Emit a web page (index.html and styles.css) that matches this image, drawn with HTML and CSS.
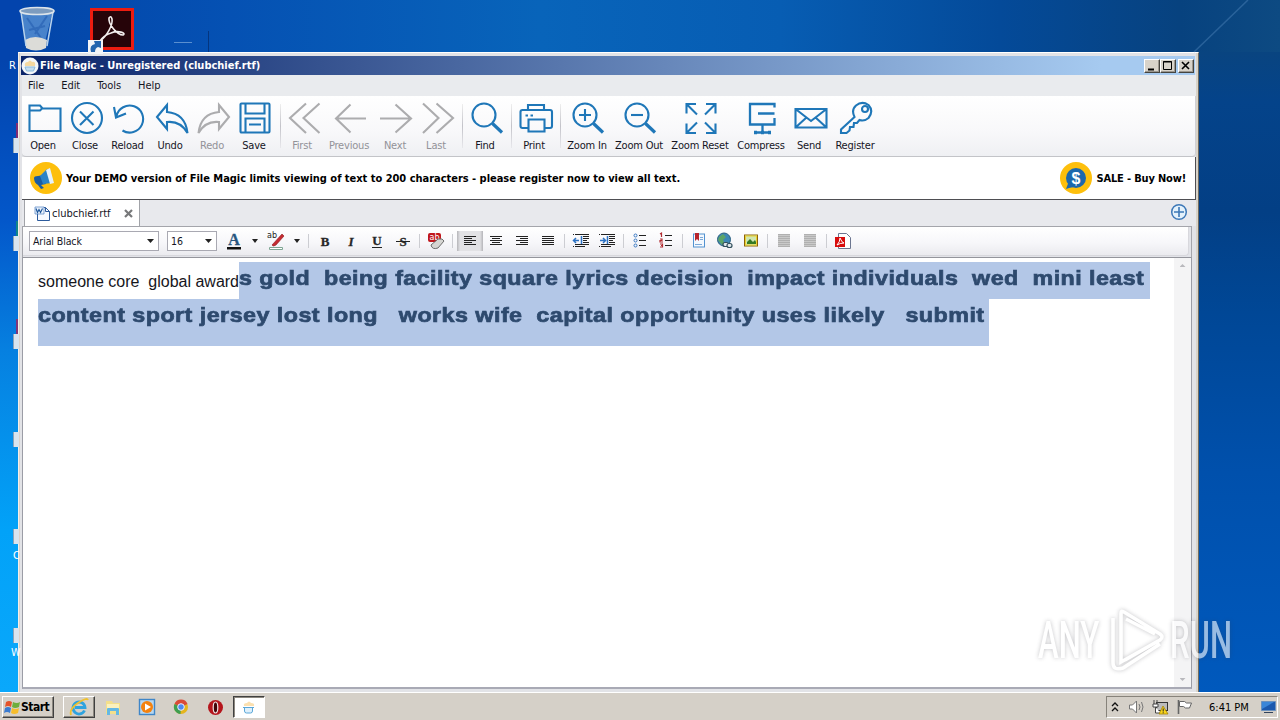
FILE: index.html
```html
<!DOCTYPE html>
<html lang="en">
<head>
<meta charset="utf-8">
<title>File Magic - Unregistered (clubchief.rtf)</title>
<link rel="stylesheet" href="styles.css">
</head>
<body>
<div class="desktop">
  <svg class="ray" width="90" height="60" viewBox="0 0 90 60"><path d="M8 52L62 0" stroke="#4f86bb" stroke-width="1.500" stroke-opacity=".45"/></svg>
  <svg class="desk-icon bin" width="40" height="46" viewBox="0 0 40 46"><path d="M4 4L9 40q10 5 18 0L36 4z" fill="#5f97d6" fill-opacity=".75"/><path d="M10 12l14 20M30 10L18 28M12 24l16-4" stroke="#2a62b4" stroke-width="2" stroke-opacity=".7"/><path d="M8 34q10-6 22 0l-1 8q-10 5-20 0z" fill="#dcdcd8"/><path d="M4 6l5 34M36 6l-6 34" stroke="#b9d3ec" stroke-width="1.500"/><ellipse cx="20" cy="5" rx="17" ry="3.500" fill="#7d9cbf" stroke="#dce4ea" stroke-width="1.600"/></svg>
  <span class="desk-label l1">R</span>
  <svg class="desk-icon acrobat" width="50" height="48" viewBox="0 0 50 48"><rect x="4.500" y="2.500" width="41" height="39" fill="#260409" stroke="#ec1c10" stroke-width="3"/><path d="M13 34C20 29 26 18 25 12q-1-4-3-1c-1 6 8 17 14 17 4-2-5-5-12-2-6 2-9 5-11 8" fill="none" stroke="#f4eeee" stroke-width="1.600"/><path d="M1 33h15v14H1z" fill="#f2f4f7"/><path d="M4 45q-2-7 4-8l-1-3h7v7l-3-1q-3 1-3 5z" fill="#2264ae"/></svg>
  <i class="dash"></i><i class="tick"></i>
  <i class="stub s1 red"></i><i class="stub s2 green"></i><i class="stub s3 red"></i><i class="stub s4"></i><i class="stub s5"></i><i class="stub s6"></i>
  <span class="desk-label l2">C</span><span class="desk-label l3">W</span>

  <main class="window">
    <header class="titlebar">
      <svg width="18" height="18" viewBox="0 0 18 18"><circle cx="9" cy="9" r="8.500" fill="#f3f6f8"/><path d="M4 9q-1-4 3-4 2-3 4 0 4-1 3 4" fill="#f6d9a0"/><path d="M4 10h10l-1.500 4h-7z" fill="#c5def0" stroke="#8dbbdd"/></svg>
      <h1>File Magic - Unregistered (clubchief.rtf)</h1>
      <div class="winbtns">
        <button><svg width="14" height="12"><path d="M3 9.500h6" stroke="#000" stroke-width="2"/></svg></button><button><svg width="14" height="12"><path d="M2.500 1.500h8v8h-8zM2 2h9" fill="none" stroke="#000"/></svg></button><button class="x"><svg width="14" height="12"><path d="M3 2l7 7M10 2L3 9" stroke="#000" stroke-width="1.600"/></svg></button>
      </div>
    </header>
    <nav class="menu"><span>File</span><span>Edit</span><span>Tools</span><span>Help</span></nav>

    <div class="toolbar">
      <div class="tool"><svg viewBox="0 0 36 34"><path d="M2.500 30V4.500H13l2.500 3H33.500V30zM2.500 9.500H13l2-2"/></svg><b>Open</b></div>
      <div class="tool"><svg viewBox="0 0 36 34"><circle cx="18" cy="17" r="15"/><path d="M11 10.500l13.500 13.500M24.500 10.500L11 24"/></svg><b>Close</b></div>
      <div class="tool rl"><svg viewBox="0 0 36 34"><path d="M5.500 15A13.500 13.500 0 1 1 11.500 29.500M3 6L5 16.500 15 12.500"/></svg><b>Reload</b></div>
      <div class="tool"><svg viewBox="0 0 36 34"><path d="M3 16L13 4v7C25 12 32 19 33.500 32 29 24 22 20 13 21v7z"/></svg><b>Undo</b></div>
      <div class="tool off"><svg viewBox="0 0 36 34"><path d="M33 16L23 4v7C11 12 4 19 2.500 32 7 24 14 20 23 21v7z"/></svg><b>Redo</b></div>
      <div class="tool sv"><svg viewBox="0 0 36 34"><rect x="3.500" y="2.500" width="29" height="29" rx="1"/><path d="M8.500 3v9.500h19V3M8.500 31V17.500h19V31M12 23.500h12"/></svg><b>Save</b></div>
      <i class="sep"></i>
      <div class="tool off"><svg viewBox="0 0 36 34"><path d="M20 2.500L4 17l16 15M33.500 2.500L17.500 17l16 15"/></svg><b>First</b></div>
      <div class="tool w52 off pv"><svg viewBox="0 0 36 34"><path d="M18.500 3.500L4 17.500l14.500 14M4 17.500h30"/></svg><b>Previous</b></div>
      <div class="tool w40 off pv"><svg viewBox="0 0 36 34"><path d="M17.500 3.500L33 17.500l-15.500 14M33 17.500H2"/></svg><b>Next</b></div>
      <div class="tool off"><svg viewBox="0 0 36 34"><path d="M3 2.500L18.500 17 3 32M16.500 2.500L33 17 16.500 32"/></svg><b>Last</b></div>
      <i class="sep"></i>
      <div class="tool w44"><svg viewBox="0 0 36 34"><circle cx="15" cy="14" r="11.500"/><path d="M23.500 22.500l9.500 9" stroke-width="3.200"/></svg><b>Find</b></div>
      <i class="sep n"></i>
      <div class="tool w44"><svg viewBox="0 0 36 34"><path d="M10 9V4h16v5M10 27H4.500q-2 0-2-2V11q0-2 2-2H32q2 0 2 2v14q0 2-2 2h-5.500"/><path d="M10.500 18.500h16v12h-16zM7.500 14.500H10M12.500 14.500H15"/></svg><b>Print</b></div>
      <i class="sep n"></i>
      <div class="tool w52"><svg class="mag" viewBox="0 0 36 34"><circle cx="15" cy="14" r="11.500"/><path d="M9 14h12M15 8v12"/><path d="M23.500 22.500l9.500 9" stroke-width="3.200"/></svg><b>Zoom In</b></div>
      <div class="tool w52"><svg class="mag" viewBox="0 0 36 34"><circle cx="15" cy="14" r="11.500"/><path d="M9 14h12"/><path d="M23.500 22.500l9.500 9" stroke-width="3.200"/></svg><b>Zoom Out</b></div>
      <div class="tool w70"><svg class="mag" viewBox="0 0 36 34"><path d="M3.500 12.500v-9.500H13M3.500 3L14 13.500M23 3h9.500v9.500M32.500 3L22 13.500M3.500 22.500V32H13M3.500 32L14 21.500M23 32h9.500v-9.500M32.500 32L22 21.500"/></svg><b>Zoom Reset</b></div>
      <div class="tool w52"><svg viewBox="0 0 36 34"><path d="M29.500 6.500V3H5v20.500h24.500V17M13 12.500h16.500M17.500 24v7M9.500 31.500h16" stroke-width="2.300"/><path d="M9 31.500h3M16 31.500h3M23 31.500h3" stroke-width="3.500"/></svg><b>Compress</b></div>
      <div class="tool w44"><svg viewBox="0 0 36 34"><path d="M2.500 8h31v18.500h-31zM2.500 8L18 20 33.500 8M2.500 26.500l11-10M33.500 26.500l-11-10"/></svg><b>Send</b></div>
      <div class="tool w48"><svg class="mag" viewBox="0 0 36 34"><path d="M16.500 16Q13 9 18 4.500 24-.5 30.500 4q5.500 6 0 13-4 3.500-9 2L19 22h-3l-.5 4H12l-.5 3.500-3 2.500H3v-3.500z"/><circle cx="27" cy="8" r="3"/></svg><b>Register</b></div>
    </div>

    <div class="banner">
      <svg width="32" height="32" viewBox="0 0 32 32"><circle cx="16" cy="16" r="16" fill="#fdbf0c"/><path d="M4 16q0-2 4-2l6-1 2 9-5 1 3 3-3 1-3-4q-4-2-4-7z" fill="#1a5da3"/><path d="M10 14l7-7 5 14-9 1z" fill="#2b83c6"/><path d="M16 8l4-2 4 15-4 1z" fill="#e6f2fb"/></svg>
      <strong>Your DEMO version of File Magic limits viewing of text to 200 characters - please register now to view all text.</strong>
      <svg class="coin" width="32" height="32" viewBox="0 0 32 32"><circle cx="16" cy="16" r="16" fill="#fdbf0c"/><circle cx="16" cy="16" r="10" fill="#1c68ad"/><path d="M6 27l3-8 5 6-5 1z" fill="#1c68ad"/><text x="16" y="21.500" text-anchor="middle" class="dollar">$</text></svg>
      <strong class="sale">SALE - Buy Now!</strong>
    </div>

    <div class="tabs">
      <div class="tab"><svg width="17" height="16" viewBox="0 0 17 16"><path d="M3.500 2.500h8l4 4v9h-12z" fill="#f7faff" stroke="#2d5b9c"/><path d="M11.500 2.500v4h4" fill="none" stroke="#2d5b9c"/><path d="M1 2h9v7H1z" fill="#eef4fc" stroke="#4c7fc2" stroke-width=".7"/><path d="M2 3.500l1.500 4 1.500-3 1.500 3 2-4" fill="none" stroke="#205a9e" stroke-width="1.200"/></svg><span>clubchief.rtf</span><svg class="tx" width="9" height="9"><path d="M1 1l7 7M8 1L1 8" stroke="#77787a" stroke-width="2.200"/></svg></div>
      <svg class="add" width="18" height="18"><circle cx="9" cy="9" r="7.300" fill="#e3f1fb" stroke="#3d78b7" stroke-width="1.500"/><path d="M9 4v10M4 9h10" stroke="#3d78b7" stroke-width="1.600"/></svg>
    </div>

    <div class="format"><div class="fbar">
      <div class="combo font"><span>Arial Black</span><i class="arr"></i></div>
      <div class="combo size"><span>16</span><i class="arr"></i></div>
      <svg class="f" viewBox="0 0 26 20"><text x="13" y="14" text-anchor="middle" class="ser a">A</text><path d="M6 16h14v2.500H6z"/></svg><i class="arr w16"></i>
      <svg class="f" viewBox="0 0 26 20"><text x="4" y="7" class="ab">ab</text><path d="M9 14L19 3l2 2-8 9q-3 2-4 0z" fill="#c42c32" stroke="#8e171c" stroke-width=".6"/><path d="M6.500 16.500h13v2h-13z" fill="#fff" stroke="#7fa694"/></svg><i class="arr w16"></i>
      <i class="s"></i>
      <svg class="f" viewBox="0 0 26 20"><text x="13" y="15" text-anchor="middle" class="ser">B</text></svg>
      <svg class="f" viewBox="0 0 26 20"><text x="13" y="15" text-anchor="middle" class="ser it">I</text></svg>
      <svg class="f" viewBox="0 0 26 20"><text x="13" y="14" text-anchor="middle" class="ser n">U</text><path d="M8 16.500h10" stroke="#222"/></svg>
      <svg class="f" viewBox="0 0 26 20"><text x="13" y="15" text-anchor="middle" class="ser n">S</text><path d="M6 10.500h14" stroke="#222"/></svg>
      <i class="s"></i>
      <svg class="f" viewBox="0 0 26 20"><rect x="5" y="2" width="13" height="9" rx="2" fill="#c0161b"/><text x="6.500" y="9" class="ab w">ab</text><path d="M8 14l7-6q5-1 6 2l-6 7q-6 2-7-3z" fill="#d5d5d2" stroke="#606060" stroke-width=".9"/></svg>
      <i class="s wide"></i>
      <svg class="f on" viewBox="0 0 26 20"><path d="M7 5.500h12M7 7.500h8M7 9.500h12M7 11.500h8M7 13.500h12"/></svg>
      <svg class="f k" viewBox="0 0 26 20"><path d="M7 5.500h12M9 7.500h8M7 9.500h12M9 11.500h8M7 13.500h12"/></svg>
      <svg class="f k" viewBox="0 0 26 20"><path d="M7 5.500h12M11 7.500h8M7 9.500h12M11 11.500h8M7 13.500h12"/></svg>
      <svg class="f k" viewBox="0 0 26 20"><path d="M7 5.500h12M7 7.500h12M7 9.500h12M7 11.500h12M7 13.500h12"/></svg>
      <i class="s"></i>
      <svg class="f k" viewBox="0 0 26 20"><path d="M7 3.500h14M15 5.500h6M15 7.500h6M15 9.500h4M15 11.500h6M7 13.500h14M7 15.500h10M5 3.500h1M5 15.500h1"/><path d="M6 9.500h5M13.500 5v8M8 7L5.500 9.500 8 12" stroke="#2c72c4" stroke-width="1.500"/></svg>
      <svg class="f k" viewBox="0 0 26 20"><path d="M7 3.500h14M15 5.500h6M15 7.500h6M15 9.500h4M15 11.500h6M7 13.500h14M7 15.500h10M5 3.500h1M5 15.500h1"/><path d="M6 9.500h5M13.500 5v8M9 7l2.500 2.500L9 12" stroke="#2c72c4" stroke-width="1.500"/></svg>
      <i class="s"></i>
      <svg class="f k" viewBox="0 0 26 20"><path d="M12 4.500h7M12 9.500h7M12 14.500h7"/><g stroke="#3b79c3"><circle cx="8.500" cy="4.500" r="1.500"/><circle cx="8.500" cy="9.500" r="1.500"/><circle cx="8.500" cy="14.500" r="1.500"/></g></svg>
      <svg class="f k" viewBox="0 0 26 20"><path d="M12 4.500h7M12 9.500h7M12 14.500h7"/><path d="M7 3l1.500-1v4M7 8h2v1.500H7V11h3M7 13h2.500v1.500H8h1.500V16H7" stroke="#b22c32" stroke-width="1.200"/></svg>
      <i class="s"></i>
      <svg class="f" viewBox="0 0 26 20"><rect x="7.500" y="3" width="11" height="13" fill="#f3f8fe" stroke="#5292d0"/><path d="M9 2h4v8l-2-2-2 2z" fill="#b6242b"/><path d="M14 6.500h3M14 8.500h3M9 13.500h7" stroke="#7ba8d8"/></svg>
      <svg class="f" viewBox="0 0 26 20"><circle cx="12" cy="8.500" r="6.500" fill="#3c87b5" stroke="#2a5f80"/><path d="M7 6l4-3 3 3-3 3 2 4-3 1-4-5z" fill="#5ca468"/><rect x="11" y="11.500" width="5.500" height="4" rx="2" fill="#dfe7eb" stroke="#314e5c" stroke-width="1.200"/><rect x="15" y="12.500" width="5" height="4" rx="2" fill="#dfe7eb" stroke="#314e5c" stroke-width="1.200"/></svg>
      <svg class="f" viewBox="0 0 26 20"><rect x="6.500" y="4" width="13" height="11" fill="#cfe6b0" stroke="#8b6208"/><rect x="7.500" y="5" width="11" height="9" fill="none" stroke="#eed02d"/><path d="M9 13V11l3-3 3 3 2-2 1 2v2z" fill="#367a23"/></svg>
      <i class="s"></i>
      <svg class="f g" viewBox="0 0 26 20"><path d="M7 3h12v13H7z" fill="#c9c9c9"/><path d="M7 3.500h12M7 5.500h12M7 7.500h12M7 9.500h12M7 11.500h12M7 13.500h12M7 15.500h12" stroke="#b0b0b0"/></svg>
      <svg class="f g" viewBox="0 0 26 20"><path d="M7 3h12v13H7z" fill="#c9c9c9"/><path d="M7 3.500h12M7 5.500h12M7 7.500h12M7 9.500h12M7 11.500h12M7 13.500h12M7 15.500h12" stroke="#b0b0b0"/></svg>
      <i class="s"></i>
      <svg class="f" viewBox="0 0 26 20"><path d="M8.500 2.500h8l4 4v11h-12z" fill="#fff" stroke="#6c7690"/><rect x="5" y="6" width="10" height="10" fill="#d80d0d"/><path d="M7 14q3-3 3-7 2 5 4 5-4 0-7 2" fill="none" stroke="#fff"/></svg>
    </div></div>

    <section class="doc">
      <div class="page">
        <p class="line one"><span class="plain">someone core&nbsp; global award</span><mark><span class="t1">s gold  being facility square lyrics decision  impact individuals  wed  mini least</span></mark></p>
        <p class="line two"><mark><span class="t2">content sport jersey lost long   works wife  capital opportunity uses likely   submit</span></mark></p>
      </div>
      <div class="scroll"><i class="up"></i><i class="down"></i></div>
    </section>
  </main>

  <div class="watermark">
    <span class="any">ANY</span>
    <svg width="64" height="68" viewBox="0 0 64 68"><path d="M17 46V6q0-3 3-1L56 27q4 3 0 6L21 53M51 27L22 12M9 11v45q0 8 10 5L56 37M17 46v9L54 34" fill="none" stroke="#fff" stroke-width="3.600"/></svg>
    <span class="run">RUN</span>
  </div>

  <footer class="taskbar">
    <button class="start"><svg width="17" height="17" viewBox="0 0 17 17"><path d="M2 3q3-2 6 0L7 8Q4 6 1 8z" fill="#e4532a"/><path d="M9 3q4 2 7 0l-1 5q-4 2-7 0z" fill="#6fae3c"/><path d="M1 9q3-2 6 0l-1 5q-3-2-6 0z" fill="#3a7bd0"/><path d="M8 9q4 2 7 0l-1 5q-4 2-7 0z" fill="#f6bd2c"/></svg>Start</button>
    <div class="task raised"><svg width="20" height="20" viewBox="0 0 20 20"><path d="M15.500 13.500A6 6 0 1 1 16 10.500H6" fill="none" stroke="#2ea3df" stroke-width="2.800"/><path d="M2 18Q0 12 9 6t10-3" fill="none" stroke="#efc12f" stroke-width="1.800"/></svg></div>
    <div class="task"><svg width="18" height="18" viewBox="0 0 18 18"><path d="M2 3h6l1 2h7v11H2z" fill="#f3df8b"/><path d="M3 6h12v5H3z" fill="#fbf1bd"/><path d="M3 17v-6q0-1 1-1h10q1 0 1 1v6h-3v-4H6v4z" fill="#64b8e4"/></svg></div>
    <div class="task"><svg width="18" height="18" viewBox="0 0 18 18"><rect x="1.500" y="1.500" width="15" height="15" fill="#b8d7f0" stroke="#3f86c8" stroke-width="1.400"/><circle cx="9" cy="9" r="6" fill="#f4820f"/><path d="M7 5.500l6 3.500-6 3.500z" fill="#fff"/></svg></div>
    <div class="task"><svg width="16" height="16" viewBox="0 0 16 16"><circle cx="8" cy="8" r="7" fill="#e5b51d"/><path d="M8 8L1.500 5A7 7 0 0 1 14.500 5z" fill="#d94a38"/><path d="M8 8L1.500 5a7 7 0 0 0 6 10z" fill="#3f9e50"/><circle cx="8" cy="8" r="3.300" fill="#4d8af0" stroke="#eef" stroke-width="1"/></svg></div>
    <div class="task"><svg width="17" height="17" viewBox="0 0 17 17"><circle cx="8.500" cy="8.500" r="7.500" fill="#b5151c"/><ellipse cx="8.500" cy="8.500" rx="2.300" ry="5.500" fill="#3f0508" stroke="#f0e6e6" stroke-width="1.200"/></svg></div>
    <div class="task pressed"><svg width="18" height="18" viewBox="0 0 18 18"><path d="M4 8q-1-3 3-3 2-3 4 0 4 0 3 3" fill="#fbe0b0"/><path d="M3 9.500h11M4.500 10v3q0 2 2 2h4q2 0 2-2v-3" fill="#dff0fb" stroke="#5aa7d8"/></svg></div>
    <div class="tray">
      <svg width="8" height="12"><path d="M1 5l3-3 3 3M1 10l3-3 3 3" fill="none" stroke="#111" stroke-width="1.300"/></svg>
      <svg width="18" height="16" class="vol"><path d="M1.500 6h3l4-4v12l-4-4h-3z" fill="#fff" stroke="#777"/><path d="M11 5q2 3 0 6M13.500 3q3 5 0 10" fill="none" stroke="#777"/></svg>
      <svg width="18" height="16" class="net"><rect x="4.500" y="3.500" width="11" height="8" fill="#bbb" stroke="#333"/><path d="M2 1v4M5 1v4M1 5h5v3H1zM3.500 8v6h5" fill="#fff" stroke="#444"/><path d="M11 7l5 8H7z" fill="#f9d51b" stroke="#a48400" stroke-width=".8"/><path d="M11.200 9.500v3M11.200 13.300v1" stroke="#222"/></svg>
      <svg width="18" height="16" class="flag"><path d="M2.500 1v14" stroke="#666" stroke-width="1.600"/><path d="M3.500 2.500h5l2 1.500h5l-2 5h-4l-2-1.500h-4z" fill="#fff" stroke="#666"/></svg>
      <time>6:41 PM</time>
      <svg width="17" height="14" class="show"><path d="M1.500 1.500h14v9h-14z" fill="#1c59ae" stroke="#6c91bd"/><path d="M2 9L14 2H2z" fill="#3b86d8"/><path d="M4 12.500h9" stroke="#32435c"/></svg>
    </div>
  </footer>
</div>
</body>
</html>
```
FILE: styles.css
```css
* { box-sizing: border-box; }
body { margin: 0; width: 1280px; height: 720px; overflow: hidden; font: 11px/13px "DejaVu Sans Condensed", "DejaVu Sans", sans-serif; color: #15151f; }
h1, p { margin: 0; font: inherit; }
svg { display: block; flex: none; }
button { padding: 0; margin: 0; font: inherit; }

.desktop { position: relative; width: 1280px; height: 720px; padding: 52px 0 0 18px; background:
  linear-gradient(180deg, #0344ad 60px, #0357ca 220px, #0680e0 350px, #02a2f8 530px, #0aa8fb 692px) 0 0 / 22px 100% no-repeat,
  linear-gradient(180deg, #094480 0, #04438a 50px, #033f85 160px, #004796 260px, #0050ac 420px, #0059bd 640px, #0056b8 100%) 1190px 52px / 90px 100% no-repeat,
  linear-gradient(90deg, #0344a8 0, #0551b3 230px, #0864ba 540px, #075db3 780px, #044a99 1000px, #07427f 1180px, #0d4a82 1280px); }
.desk-icon, .desk-label, .dash, .tick, .stub, .ray { position: absolute; }
.ray { left: 1186px; top: 0; }
.bin { left: 17px; top: 6px; }
.acrobat { left: 87px; top: 7px; }
.desk-label { color: #fff; font: 11px/13px "DejaVu Sans Condensed", sans-serif; }
.l1 { left: 9px; top: 59px; }
.l2 { left: 13px; top: 549px; }
.l3 { left: 11px; top: 646px; }
.dash { left: 174px; top: 42px; width: 18px; height: 1px; background: #5a8fd0; }
.tick { left: 208px; top: 31px; width: 1px; height: 21px; background: #04357f; }
.stub { left: 13px; width: 6px; height: 15px; background: #d9e4ee; border-left: 1px solid #8ca3b8; }
.stub::before { content: ""; position: absolute; left: 2px; top: -15px; width: 2px; height: 15px; opacity: .8; }
.red::before { background: #a02562; }
.green::before { background: #159078; }
.s1 { top: 138px; } .s2 { top: 236px; } .s3 { top: 334px; } .s4 { top: 432px; } .s5 { top: 529px; } .s6 { top: 628px; }

.window { width: 1181px; height: 641px; padding: 3px 2px 0 3px; background: #e2e3e7; border: 1px solid #fff; border-left-color: #f4efe9; border-right-color: #706b60; border-bottom: 0; box-shadow: inset -2px 0 #d9d4ca, inset 1px 0 #ddd2c9; display: flex; flex-direction: column; }
.titlebar { height: 19px; flex: none; display: flex; align-items: center; background: linear-gradient(90deg, #0a246a, #a6caf0 92%); margin: 0 1px 0 -1px; color: #fff; }
.titlebar h1 { font-weight: bold; letter-spacing: -.02px; margin-left: 1px; flex: 1; }
.winbtns { display: flex; margin-right: 1px; }
.winbtns button { width: 16px; height: 14px; background: #d8d3ca; border: 1px solid; border-color: #fff #45443f #45443f #fff; box-shadow: inset -1px -1px #9c978f; overflow: hidden; }
.winbtns .x { margin-left: 2px; }

.menu { height: 21px; flex: none; display: flex; gap: 17px; align-items: center; padding-left: 6px; background: #e9ebee; letter-spacing: -.06px; }
.toolbar { height: 61px; flex: none; display: flex; background: linear-gradient(#fff, #f8f8fa 60%, #eff0f3); border-bottom: 1px solid #c3c4c8; border-right: 1px solid #d0d1d6; border-radius: 0 0 4px 4px; }
.tool { width: 42px; flex: none; padding-top: 5px; display: flex; flex-direction: column; align-items: center; }
.tool svg { width: 36px; height: 34px; margin-left: 4px; fill: none; stroke: #1f77b8; stroke-width: 2.1; }
.tool b { font-weight: normal; white-space: nowrap; margin-top: 4px; letter-spacing: -.2px; }
.tool svg.mag { margin-left: 2px; }
.tool.sv svg, .tool.pv svg { margin-left: 2px; }
.off svg { stroke: #acacae; }
.off b { color: #929298; }
.rl { width: 43px; }
.rl svg { margin-left: 2px; }
.w40 { width: 40px; } .w44 { width: 44px; } .w48 { width: 48px; } .w52 { width: 52px; } .w70 { width: 70px; }
.sep { width: 1px; flex: none; margin: 8px 0 8px 5px; background: linear-gradient(#eee, #c3c3c9 50%, #e8e8ec); }
.sep.n { margin-left: 4px; }

.banner { height: 43px; flex: none; display: flex; align-items: center; padding: 0 9px 0 8px; background: #fff; border-bottom: 1px solid #4e4e52; border-right: 1px solid #4e4e52; color: #000; }
.banner strong { margin-left: 4px; white-space: nowrap; letter-spacing: -.022px; }
.banner .sale { letter-spacing: -.17px; }
.coin { margin-left: auto; }
.dollar { font: bold 16px "Liberation Sans", sans-serif; fill: #fff; }

.tabs { height: 26px; flex: none; display: flex; justify-content: space-between; background: #e8e9ed; padding: 0 8px 0 2px; }
.tab { width: 116px; height: 26px; display: flex; align-items: center; padding: 0 6px 0 9px; background: #fff; border: 1px solid #a1a3a8; border-width: 0 1px; }
.tab span { margin-left: 1px; flex: 1; white-space: nowrap; letter-spacing: 0; }
.add { margin-top: 3px; }

.format { height: 32px; flex: none; margin-right: 4px; background: #e2e3e8; border: 1px solid #a4a5ab; border-bottom-color: #94959c; padding-right: 2px; }
.fbar { height: 29px; display: flex; align-items: center; padding-left: 6px; background: linear-gradient(#fff, #f7f7fa 55%, #ebebef); border: 1px solid #d8d8dd; border-width: 0 1px 1px 0; border-radius: 0 0 4px 0; }
.combo { height: 20px; flex: none; border: 1px solid #a9a9b2; background: #fff; display: flex; align-items: center; justify-content: space-between; padding: 0 4px 0 3px; }
.combo span { font-size: 10.5px; letter-spacing: -.1px; }
.font { width: 130px; } .size { width: 50px; margin: 0 4px 0 8px; }
.arr { width: 7px; height: 4px; flex: none; background: #222; clip-path: polygon(0 0, 100% 0, 50% 100%); }
.w16 { width: 6px; margin: 0 5px; }
.f { width: 26px; height: 20px; fill: #111; }
.k, .on { fill: none; stroke: #222; }
.on { background: linear-gradient(90deg, #b5b5b9, #e2e2e5 12%, #e2e2e5 88%, #b5b5b9); }
.s { width: 1px; height: 14px; flex: none; margin: 0 3px; background: #cccdd2; }
.wide { margin-right: 4px; }
.ser { font: bold 13px "Liberation Serif", serif; fill: #272727; stroke: #272727; stroke-width: .3px; }
.it { font-style: italic; }
.a { fill: #285680; stroke: #285680; font-size: 16px; }
.ab { font: 8px "DejaVu Sans", sans-serif; fill: #222; }
.w { fill: #fff; }

.doc { height: 431px; flex: none; margin-right: 4px; display: flex; background: #fff; border: 1px solid #9b9da6; border-top: 0; border-bottom: 2px solid #a9aab5; overflow: hidden; }
.page { flex: 1; padding: 4px 0 0 15px; }
.scroll { width: 17px; background: #f4f4f5; display: flex; flex-direction: column; justify-content: space-between; align-items: center; padding: 6px 0; }
.up, .down { width: 6px; height: 3px; background: #b9b9bd; clip-path: polygon(50% 0, 100% 100%, 0 100%); }
.down { transform: scaleY(-1); }
.line { display: flex; white-space: pre; }
.one { height: 37px; }
.two { height: 47px; }
.plain { width: 201px; font: 16px/40px "Liberation Sans", sans-serif; color: #16161c; }
mark { display: block; height: 100%; background: #b3c7e7; color: #2e4a6e; font: bold 21px/32px "Liberation Sans", sans-serif; -webkit-text-stroke: .7px #2e4a6e; }
.one mark { width: 911px; }
.two mark { width: 951px; }
.t1, .t2 { display: inline-block; transform-origin: 0 0; letter-spacing: .4px; transform: scaleX(1.108); }
.t2 { transform: scaleX(1.111); }

.watermark { position: absolute; left: 1038px; top: 607px; height: 68px; display: flex; color: #fff; opacity: .6; filter: drop-shadow(0 0 2px rgba(60, 60, 70, .5)); }
.watermark span { font: 500 51px/68px Roboto, sans-serif; display: block; width: 64px; transform: scaleX(.61); transform-origin: 0 0; }
.watermark svg { margin: 0 2px; }

.taskbar { position: absolute; left: 0; top: 692px; width: 1280px; height: 28px; display: flex; align-items: center; padding: 1px 2px 0; background: #d5d0c8; border-top: 1px solid #fff; }
.start { width: 52px; height: 22px; display: flex; align-items: center; padding: 0 1px; font-weight: bold; font-size: 12px; letter-spacing: -.5px; background: #d5d0c8; border: 1px solid; border-color: #fff #404040 #404040 #fff; box-shadow: inset -1px -1px #8c8880; margin-right: 9px; }
.task { width: 34px; height: 22px; flex: none; display: flex; align-items: center; justify-content: center; }
.raised { width: 32px; border: 1px solid; border-color: #fff #404040 #404040 #fff; box-shadow: inset -1px -1px #8c8880; margin-right: 1px; }
.pressed { width: 32px; margin-left: 1px; background: #fff; border: 1px solid; border-color: #404040 #fff #fff #404040; box-shadow: inset 1px 1px #8c8880; }
.tray { margin-left: auto; width: 172px; height: 22px; display: flex; align-items: center; padding-left: 4px; border: 1px solid; border-color: #87837b #fff #fff #87837b; color: #000; }
.vol { margin-left: 9px; }
.net { margin-left: 6px; }
.flag { margin-left: 6px; }
.tray time { margin-left: 15px; white-space: nowrap; letter-spacing: 0; }
.show { margin-left: auto; }
```
